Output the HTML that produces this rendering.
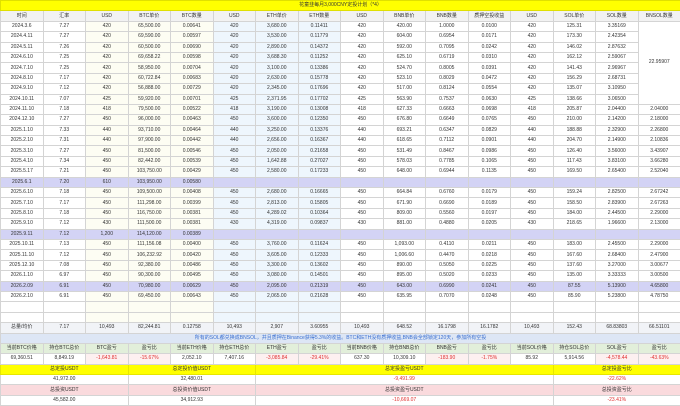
<!DOCTYPE html>
<html><head><meta charset="utf-8"><style>
html,body{margin:0;padding:0;background:#fff;width:680px;height:406px;overflow:hidden}
table{border-collapse:collapse;table-layout:fixed;width:680px;font-family:"Liberation Sans","Noto Sans CJK SC",sans-serif;font-size:5px;color:#333}
td{border:1px solid #d4d4d4;padding:0;height:9.4px;line-height:9px;text-align:center;white-space:nowrap;overflow:hidden}
tr{height:10.4px}
.t td{background:#ffff00;border-color:#e0e000}
.h td{background:#f2f2f2}
td.y{background:#fdfdf3}
td.b{background:#eef6fd}
tr.p td{background:#d3d3f5}
tr.tot td{background:#f1f3f7}
.note td{background:#dde6f5;color:#3a6fd0}
.g td{background:#e2efda}
td.r{color:#e03030}
td.pk{background:#fdf0f0}
.yl td{background:#ffff00;border-color:#e6e600}
.pr td{background:#fadadd}
</style></head><body>
<table>
<colgroup><col span="16" style="width:42.5px"></colgroup>
<tr class="t"><td colspan="16">花童韭每月3,000CNY定投计划（*4）</td></tr>
<tr class="h"><td>时间</td><td>汇率</td><td>USD</td><td>BTC单价</td><td>BTC数量</td><td>USD</td><td>ETH单价</td><td>ETH数量</td><td>USD</td><td>BNB单价</td><td>BNB数量</td><td>质押空投收益</td><td>USD</td><td>SOL单价</td><td>SOL数量</td><td>BNSOL数量</td></tr>
<tr><td>2024.3.6</td><td>7.27</td><td class="y">420</td><td class="y">65,500.00</td><td class="y">0.00641</td><td class="b">420</td><td class="b">3,680.00</td><td class="b">0.11411</td><td>420</td><td>420.00</td><td>1.0000</td><td>0.0100</td><td>420</td><td>125.31</td><td>3.35169</td><td rowspan="8">22.95907</td></tr>
<tr><td>2024.4.11</td><td>7.27</td><td class="y">420</td><td class="y">69,590.00</td><td class="y">0.00597</td><td class="b">420</td><td class="b">3,530.00</td><td class="b">0.11779</td><td>420</td><td>604.00</td><td>0.6954</td><td>0.0171</td><td>420</td><td>173.30</td><td>2.42354</td></tr>
<tr><td>2024.5.11</td><td>7.26</td><td class="y">420</td><td class="y">60,500.00</td><td class="y">0.00690</td><td class="b">420</td><td class="b">2,890.00</td><td class="b">0.14372</td><td>420</td><td>592.00</td><td>0.7095</td><td>0.0242</td><td>420</td><td>146.02</td><td>2.87632</td></tr>
<tr><td>2024.6.10</td><td>7.25</td><td class="y">420</td><td class="y">69,658.22</td><td class="y">0.00598</td><td class="b">420</td><td class="b">3,688.30</td><td class="b">0.11252</td><td>420</td><td>625.10</td><td>0.6719</td><td>0.0310</td><td>420</td><td>162.12</td><td>2.59067</td></tr>
<tr><td>2024.7.10</td><td>7.25</td><td class="y">420</td><td class="y">58,950.00</td><td class="y">0.00704</td><td class="b">420</td><td class="b">3,100.00</td><td class="b">0.13386</td><td>420</td><td>524.70</td><td>0.8005</td><td>0.0391</td><td>420</td><td>141.43</td><td>2.96967</td></tr>
<tr><td>2024.8.10</td><td>7.17</td><td class="y">420</td><td class="y">60,722.84</td><td class="y">0.00683</td><td class="b">420</td><td class="b">2,630.00</td><td class="b">0.15778</td><td>420</td><td>523.10</td><td>0.8029</td><td>0.0472</td><td>420</td><td>156.29</td><td>2.68731</td></tr>
<tr><td>2024.9.10</td><td>7.12</td><td class="y">420</td><td class="y">56,888.00</td><td class="y">0.00729</td><td class="b">420</td><td class="b">2,345.00</td><td class="b">0.17696</td><td>420</td><td>517.00</td><td>0.8124</td><td>0.0554</td><td>420</td><td>135.07</td><td>3.10950</td></tr>
<tr><td>2024.10.11</td><td>7.07</td><td class="y">425</td><td class="y">59,920.00</td><td class="y">0.00701</td><td class="b">425</td><td class="b">2,371.95</td><td class="b">0.17702</td><td>425</td><td>563.90</td><td>0.7537</td><td>0.0630</td><td>425</td><td>138.66</td><td>3.06500</td></tr>
<tr><td>2024.11.10</td><td>7.18</td><td class="y">418</td><td class="y">79,500.00</td><td class="y">0.00522</td><td class="b">418</td><td class="b">3,190.00</td><td class="b">0.13008</td><td>418</td><td>627.33</td><td>0.6663</td><td>0.0698</td><td>418</td><td>205.87</td><td>2.04400</td><td>2.04000</td></tr>
<tr><td>2024.12.10</td><td>7.27</td><td class="y">450</td><td class="y">96,000.00</td><td class="y">0.00463</td><td class="b">450</td><td class="b">3,600.00</td><td class="b">0.12350</td><td>450</td><td>676.80</td><td>0.6649</td><td>0.0765</td><td>450</td><td>210.00</td><td>2.14200</td><td>2.18000</td></tr>
<tr><td>2025.1.10</td><td>7.33</td><td class="y">440</td><td class="y">93,710.00</td><td class="y">0.00464</td><td class="b">440</td><td class="b">3,250.00</td><td class="b">0.13376</td><td>440</td><td>693.21</td><td>0.6347</td><td>0.0829</td><td>440</td><td>188.88</td><td>2.32900</td><td>2.26800</td></tr>
<tr><td>2025.2.10</td><td>7.31</td><td class="y">440</td><td class="y">97,900.00</td><td class="y">0.00442</td><td class="b">440</td><td class="b">2,656.00</td><td class="b">0.16367</td><td>440</td><td>618.65</td><td>0.7112</td><td>0.0901</td><td>440</td><td>204.70</td><td>2.14900</td><td>2.10836</td></tr>
<tr><td>2025.3.10</td><td>7.27</td><td class="y">450</td><td class="y">81,500.00</td><td class="y">0.00546</td><td class="b">450</td><td class="b">2,050.00</td><td class="b">0.21658</td><td>450</td><td>531.49</td><td>0.8467</td><td>0.0986</td><td>450</td><td>126.40</td><td>3.56000</td><td>3.43907</td></tr>
<tr><td>2025.4.10</td><td>7.34</td><td class="y">450</td><td class="y">82,442.00</td><td class="y">0.00539</td><td class="b">450</td><td class="b">1,642.88</td><td class="b">0.27027</td><td>450</td><td>578.03</td><td>0.7785</td><td>0.1065</td><td>450</td><td>117.43</td><td>3.83100</td><td>3.66280</td></tr>
<tr><td>2025.5.17</td><td>7.21</td><td class="y">450</td><td class="y">103,750.00</td><td class="y">0.00429</td><td class="b">450</td><td class="b">2,580.00</td><td class="b">0.17233</td><td>450</td><td>648.00</td><td>0.6944</td><td>0.1135</td><td>450</td><td>169.50</td><td>2.65400</td><td>2.52040</td></tr>
<tr class="p"><td>2025.6.1</td><td>7.20</td><td>610</td><td>103,950.00</td><td>0.00580</td><td></td><td></td><td></td><td></td><td></td><td></td><td></td><td></td><td></td><td></td><td></td></tr>
<tr><td>2025.6.10</td><td>7.18</td><td class="y">450</td><td class="y">109,500.00</td><td class="y">0.00408</td><td class="b">450</td><td class="b">2,680.00</td><td class="b">0.16665</td><td>450</td><td>664.84</td><td>0.6760</td><td>0.0179</td><td>450</td><td>159.24</td><td>2.82500</td><td>2.67242</td></tr>
<tr><td>2025.7.10</td><td>7.17</td><td class="y">450</td><td class="y">111,298.00</td><td class="y">0.00399</td><td class="b">450</td><td class="b">2,813.00</td><td class="b">0.15805</td><td>450</td><td>671.90</td><td>0.6690</td><td>0.0189</td><td>450</td><td>158.50</td><td>2.83900</td><td>2.67263</td></tr>
<tr><td>2025.8.10</td><td>7.18</td><td class="y">450</td><td class="y">116,750.00</td><td class="y">0.00381</td><td class="b">450</td><td class="b">4,289.02</td><td class="b">0.10364</td><td>450</td><td>809.00</td><td>0.5560</td><td>0.0197</td><td>450</td><td>184.00</td><td>2.44500</td><td>2.29000</td></tr>
<tr><td>2025.9.10</td><td>7.12</td><td class="y">430</td><td class="y">111,500.00</td><td class="y">0.00381</td><td class="b">430</td><td class="b">4,319.00</td><td class="b">0.09837</td><td>430</td><td>881.00</td><td>0.4880</td><td>0.0205</td><td>430</td><td>218.65</td><td>1.96600</td><td>2.13000</td></tr>
<tr class="p"><td>2025.9.11</td><td>7.12</td><td>1,200</td><td>114,120.00</td><td>0.00389</td><td></td><td></td><td></td><td></td><td></td><td></td><td></td><td></td><td></td><td></td><td></td></tr>
<tr><td>2025.10.11</td><td>7.13</td><td class="y">450</td><td class="y">111,156.08</td><td class="y">0.00400</td><td class="b">450</td><td class="b">3,760.00</td><td class="b">0.11624</td><td>450</td><td>1,093.00</td><td>0.4110</td><td>0.0211</td><td>450</td><td>183.00</td><td>2.45500</td><td>2.29000</td></tr>
<tr><td>2025.11.10</td><td>7.12</td><td class="y">450</td><td class="y">106,232.92</td><td class="y">0.00420</td><td class="b">450</td><td class="b">3,605.00</td><td class="b">0.12333</td><td>450</td><td>1,006.60</td><td>0.4470</td><td>0.0218</td><td>450</td><td>167.60</td><td>2.68400</td><td>2.47900</td></tr>
<tr><td>2025.12.10</td><td>7.08</td><td class="y">450</td><td class="y">92,380.00</td><td class="y">0.00486</td><td class="b">450</td><td class="b">3,300.00</td><td class="b">0.13602</td><td>450</td><td>890.00</td><td>0.5050</td><td>0.0225</td><td>450</td><td>137.60</td><td>3.27000</td><td>3.00677</td></tr>
<tr><td>2026.1.10</td><td>6.97</td><td class="y">450</td><td class="y">90,300.00</td><td class="y">0.00495</td><td class="b">450</td><td class="b">3,080.00</td><td class="b">0.14501</td><td>450</td><td>895.00</td><td>0.5020</td><td>0.0233</td><td>450</td><td>135.00</td><td>3.33333</td><td>3.00500</td></tr>
<tr class="p"><td>2026.2.09</td><td>6.91</td><td>450</td><td>70,980.00</td><td>0.00629</td><td>450</td><td>2,095.00</td><td>0.21319</td><td>450</td><td>643.00</td><td>0.6990</td><td>0.0241</td><td>450</td><td>87.55</td><td>5.13900</td><td>4.65800</td></tr>
<tr><td>2026.2.10</td><td>6.91</td><td class="y">450</td><td class="y">69,450.00</td><td class="y">0.00643</td><td class="b">450</td><td class="b">2,065.00</td><td class="b">0.21628</td><td>450</td><td>635.95</td><td>0.7070</td><td>0.0248</td><td>450</td><td>85.90</td><td>5.23800</td><td>4.78750</td></tr>
<tr><td></td><td></td><td class="y"></td><td class="y"></td><td class="y"></td><td class="b"></td><td class="b"></td><td class="b"></td><td></td><td></td><td></td><td></td><td></td><td></td><td></td><td></td></tr>
<tr><td></td><td></td><td class="y"></td><td class="y"></td><td class="y"></td><td class="b"></td><td class="b"></td><td class="b"></td><td></td><td></td><td></td><td></td><td></td><td></td><td></td><td></td></tr>
<tr class="tot"><td>总量/均价</td><td>7.17</td><td>10,493</td><td>82,244.81</td><td>0.12758</td><td>10,493</td><td>2,907</td><td>3.60955</td><td>10,493</td><td>648.52</td><td>16.1798</td><td>16.1782</td><td>10,493</td><td>152.43</td><td>68.83803</td><td>66.51101</td></tr>
<tr class="note"><td colspan="16">所有的SOL都兑换成BNSOL，并且质押在Binance获得5.3%的收益。BTC和ETH没有质押收益,BNB会全部锁定120天，参加所有空投</td></tr>
<tr class="g"><td>当前BTC价格</td><td>持仓BTC总价</td><td>BTC盈亏</td><td>盈亏比</td><td>当前ETH价格</td><td>持仓ETH总价</td><td>ETH盈亏</td><td>盈亏比</td><td>当前BNB价格</td><td>持仓BNB总价</td><td>BNB盈亏</td><td>盈亏比</td><td>当前SOL价格</td><td>持仓SOL总价</td><td>SOL盈亏</td><td>盈亏比</td></tr>
<tr><td>69,360.51</td><td>8,849.19</td><td class="r pk">-1,643.81</td><td class="r pk">-15.67%</td><td>2,052.10</td><td>7,407.16</td><td class="r pk">-3,085.84</td><td class="r pk">-29.41%</td><td>637.30</td><td>10,309.10</td><td class="r pk">-183.90</td><td class="r pk">-1.75%</td><td>85.92</td><td>5,914.56</td><td class="r pk">-4,578.44</td><td class="r pk">-43.63%</td></tr>
<tr class="yl"><td colspan="3">总定投USDT</td><td colspan="3">总定投价值USDT</td><td colspan="7">总定投盈亏USDT</td><td colspan="3">总定投盈亏比</td></tr>
<tr><td colspan="3">41,972.00</td><td colspan="3">32,480.01</td><td colspan="7" class="r">-9,491.99</td><td colspan="3" class="r">-22.62%</td></tr>
<tr class="pr"><td colspan="3">总投资USDT</td><td colspan="3">总投资价值USDT</td><td colspan="7">总投资盈亏USDT</td><td colspan="3">总投资盈亏比</td></tr>
<tr><td colspan="3">45,582.00</td><td colspan="3">34,912.93</td><td colspan="7" class="r">-10,669.07</td><td colspan="3" class="r">-23.41%</td></tr>
</table>
</body></html>
